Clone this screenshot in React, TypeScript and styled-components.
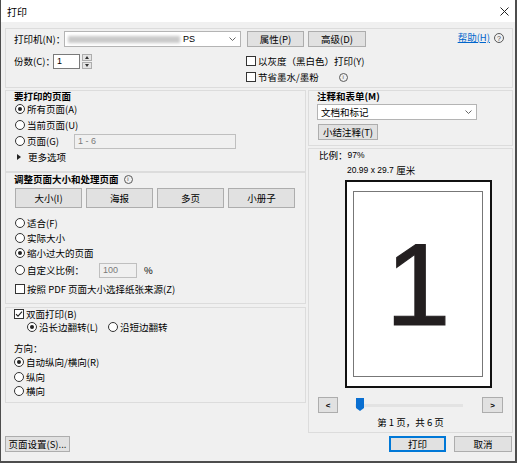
import React from "react";
import styled, { createGlobalStyle } from "styled-components";

const GlobalStyle = createGlobalStyle`
  html, body {
    margin: 0;
    padding: 0;
    background: #fff;
  }
  body {
    font-family: "Noto Sans CJK SC", "Noto Sans", sans-serif;
    font-size: 9.5px;
    color: #000;
  }
  * {
    box-sizing: border-box;
  }
`;

const Window = styled.div`
  width: 517px;
  height: 463px;
  background: #f0f0f0;
  border-left: 1px solid #4d4d4d;
  border-right: 2px solid #4d4d4d;
  border-bottom: 2px solid #4d4d4d;
  display: flex;
  flex-direction: column;
`;

const TitleBar = styled.div`
  height: 22px;
  flex: none;
  background: #fff;
  display: flex;
  align-items: center;
  justify-content: space-between;
  padding: 0 6px;
  font-size: 10px;
`;

const Content = styled.div`
  flex: 1;
  display: flex;
  flex-direction: column;
  padding: 6px 2px 0 4px;
`;

const Group = styled.div<{ $h: number; $mt?: number }>`
  height: ${(p) => p.$h}px;
  margin-top: ${(p) => p.$mt || 0}px;
  flex: none;
  border: 1px solid #dcdcdc;
  padding: 0 8px;
  display: flex;
  flex-direction: column;
`;

const Row = styled.div<{ $h: number; $mt?: number; $pl?: number }>`
  height: ${(p) => p.$h}px;
  margin-top: ${(p) => p.$mt || 0}px;
  padding-left: ${(p) => p.$pl || 0}px;
  flex: none;
  display: flex;
  align-items: center;
  white-space: nowrap;
`;

const Heading = styled.span`
  font-weight: bold;
`;

const Label = styled.span<{ $w?: number }>`
  width: ${(p) => (p.$w ? `${p.$w}px` : "auto")};
  flex: none;
`;

const Select = styled.div<{ $w: number }>`
  width: ${(p) => p.$w}px;
  height: 16px;
  background: #fff;
  border: 1px solid #b4b4b4;
  display: flex;
  align-items: center;
  padding: 0 4px 0 3px;
`;

const Blurred = styled.span`
  width: 112px;
  height: 7px;
  background: #c9c9c9;
  filter: blur(1.6px);
  margin-right: 3px;
`;

const Chevron = styled.svg`
  margin-left: auto;
  flex: none;
`;

const Button = styled.div<{ $w: number; $h?: number; $ml?: number; $primary?: boolean }>`
  width: ${(p) => p.$w}px;
  height: ${(p) => p.$h || 16}px;
  margin-left: ${(p) => p.$ml || 0}px;
  flex: none;
  display: flex;
  align-items: center;
  justify-content: center;
  background: #e1e1e1;
  border: 1px solid ${(p) => (p.$primary ? "#0078d7" : "#adadad")};
  box-shadow: ${(p) => (p.$primary ? "inset 0 0 0 1px #0078d7" : "none")};
`;

const HelpLink = styled.span`
  margin-left: auto;
  align-self: flex-start;
  line-height: 12px;
  color: #0066cc;
  text-decoration: underline;
`;

const CircleIcon = styled.span<{ $size: number; $ml?: number }>`
  width: ${(p) => p.$size}px;
  height: ${(p) => p.$size}px;
  margin-left: ${(p) => p.$ml || 0}px;
  flex: none;
  border: 1px solid #5a5a5a;
  border-radius: 50%;
  display: inline-flex;
  align-items: center;
  justify-content: center;
  font-family: "Liberation Sans", sans-serif;
  font-size: ${(p) => p.$size - 3}px;
  line-height: 1;
  color: #444;
`;

const HelpIcon = styled(CircleIcon)`
  align-self: flex-start;
  margin-top: 2px;
`;

const TextInput = styled.div<{ $w: number; $ml?: number; $disabled?: boolean }>`
  width: ${(p) => p.$w}px;
  height: 15px;
  margin-left: ${(p) => p.$ml || 0}px;
  flex: none;
  display: flex;
  align-items: center;
  padding-left: 3px;
  background: ${(p) => (p.$disabled ? "#f0f0f0" : "#fff")};
  border: 1px solid ${(p) => (p.$disabled ? "#bfbfbf" : "#7a7a7a")};
  color: ${(p) => (p.$disabled ? "#7a7a7a" : "#000")};
  font-family: "Liberation Sans", sans-serif;
  font-size: 9px;
`;

const Spinner = styled.div`
  width: 10px;
  height: 15px;
  margin-left: 2px;
  display: flex;
  flex-direction: column;
  gap: 1px;
`;

const SpinHalf = styled.div`
  flex: 1;
  background: #e5e5e5;
  border: 1px solid #adadad;
  display: flex;
  align-items: center;
  justify-content: center;
`;

const CopiesBlock = styled.div`
  width: 232px;
  height: 16px;
  display: flex;
  align-items: center;
  flex: none;
`;

const CheckColumn = styled.div`
  display: flex;
  flex-direction: column;
`;

const Option = styled.span<{ $ml?: number }>`
  display: inline-flex;
  align-items: center;
  margin-left: ${(p) => p.$ml || 0}px;
  flex: none;
`;

const Radio = styled.span<{ $checked?: boolean }>`
  width: 10px;
  height: 10px;
  flex: none;
  border: 1px solid #333;
  border-radius: 50%;
  background: #fff;
  display: inline-flex;
  align-items: center;
  justify-content: center;
  margin-right: 2px;
  &::after {
    content: "";
    width: 4px;
    height: 4px;
    border-radius: 50%;
    background: ${(p) => (p.$checked ? "#222" : "transparent")};
  }
`;

const Check = styled.span`
  width: 10px;
  height: 10px;
  flex: none;
  border: 1px solid #333;
  background: #fff;
  display: inline-flex;
  align-items: center;
  justify-content: center;
  margin-right: 2px;
`;

const OptionText = styled.span<{ $w?: number }>`
  width: ${(p) => (p.$w ? `${p.$w}px` : "auto")};
  flex: none;
`;

const MainRow = styled.div`
  display: flex;
  gap: 2px;
  margin-top: 2px;
  height: 343px;
`;

const LeftCol = styled.div`
  width: 301px;
  display: flex;
  flex-direction: column;
`;

const RightCol = styled.div`
  flex: 1;
  display: flex;
  flex-direction: column;
`;

const ButtonRow = styled.div`
  display: flex;
  gap: 4px;
  margin-top: 3px;
  padding-left: 1px;
`;

const PageFrame = styled.div`
  width: 147px;
  height: 208px;
  margin: 4px 0 0 28px;
  flex: none;
  background: #fff;
  border: 2px solid #111;
  padding: 9px 7px 9px 6px;
  display: flex;
`;

const PageInner = styled.div`
  flex: 1;
  border: 1px solid #777;
  display: flex;
  align-items: center;
  justify-content: center;
`;

const BigNumber = styled.span`
  font-family: "Liberation Sans", Arial, sans-serif;
  font-size: 117px;
  line-height: 1;
  color: #231f20;
  -webkit-text-stroke: 1.2px #231f20;
`;

const NavButton = styled(Button)`
  font-family: "Liberation Sans", sans-serif;
  font-size: 8px;
  font-weight: bold;
`;

const Track = styled.div`
  position: relative;
  width: 108px;
  height: 3px;
  margin-left: 17px;
  background: #e3e3e3;
`;

const Thumb = styled.svg`
  position: absolute;
  left: 1px;
  top: -6px;
`;

const PageInfo = styled.div`
  height: 13px;
  margin-top: 2px;
  display: flex;
  align-items: center;
  justify-content: center;
`;

const BottomBar = styled.div`
  display: flex;
  align-items: center;
  margin-top: 3px;
  padding-right: 1px;
`;

const Spacer = styled.div`
  flex: 1;
`;

const Latin = styled.span`
  font-family: "Liberation Sans", sans-serif;
  font-size: 8.5px;
`;

const ChevronIcon = () => (
  <Chevron width="7" height="4" viewBox="0 0 7 4">
    <path d="M0.5 0.5 L3.5 3.5 L6.5 0.5" fill="none" stroke="#555" strokeWidth="0.9" />
  </Chevron>
);

const Tick = () => (
  <svg width="8" height="8" viewBox="0 0 8 8">
    <path d="M1 4.2 L3 6.2 L7 1.6" fill="none" stroke="#222" strokeWidth="1.1" />
  </svg>
);

export default function App() {
  return (
    <>
      <GlobalStyle />
      <Window>
        <TitleBar>
          <span>打印</span>
          <svg width="9" height="9" viewBox="0 0 9 9">
            <path d="M0.5 0.5 L8.5 8.5 M8.5 0.5 L0.5 8.5" stroke="#222" strokeWidth="1" />
          </svg>
        </TitleBar>
        <Content>
          <Group $h={60}>
            <Row $h={16} $mt={2}>
              <Label $w={50}>打印机(N)：</Label>
              <Select $w={177}>
                <Blurred />
                <Latin style={{ fontSize: 9 }}>PS</Latin>
                <ChevronIcon />
              </Select>
              <Button $w={57} $ml={6}>属性(P)</Button>
              <Button $w={58} $ml={4}>高级(D)</Button>
              <HelpLink>帮助(H)</HelpLink>
              <HelpIcon $size={10} $ml={4}>?</HelpIcon>
            </Row>
            <Row $h={32} $mt={6} style={{ alignItems: "flex-start" }}>
              <CopiesBlock>
                <Label $w={39}>份数(C)：</Label>
                <TextInput $w={27}>1</TextInput>
                <Spinner>
                  <SpinHalf>
                    <svg width="4" height="3" viewBox="0 0 4 3">
                      <path d="M0 3 L2 0 L4 3 Z" fill="#333" />
                    </svg>
                  </SpinHalf>
                  <SpinHalf>
                    <svg width="4" height="3" viewBox="0 0 4 3">
                      <path d="M0 0 L2 3 L4 0 Z" fill="#333" />
                    </svg>
                  </SpinHalf>
                </Spinner>
              </CopiesBlock>
              <CheckColumn>
                <Row $h={16}>
                  <Check />
                  <OptionText>以灰度（黑白色）打印(Y)</OptionText>
                </Row>
                <Row $h={16}>
                  <Check />
                  <OptionText>节省墨水/墨粉</OptionText>
                  <CircleIcon $size={9} $ml={20}>i</CircleIcon>
                </Row>
              </CheckColumn>
            </Row>
          </Group>

          <MainRow>
            <LeftCol>
              <Group $h={82}>
                <Row $h={10}>
                  <Heading>要打印的页面</Heading>
                </Row>
                <Row $h={16} $pl={1}>
                  <Radio $checked />
                  <OptionText>所有页面(A)</OptionText>
                </Row>
                <Row $h={15} $pl={1}>
                  <Radio />
                  <OptionText>当前页面(U)</OptionText>
                </Row>
                <Row $h={18} $pl={1}>
                  <Radio />
                  <OptionText $w={47}>页面(G)</OptionText>
                  <TextInput $w={162} $disabled>
                    1 - 6
                  </TextInput>
                </Row>
                <Row $h={14} $pl={3}>
                  <svg width="4" height="6" viewBox="0 0 4 6">
                    <path d="M0 0 L4 3 L0 6 Z" fill="#222" />
                  </svg>
                  <OptionText style={{ marginLeft: 7 }}>更多选项</OptionText>
                </Row>
              </Group>

              <Group $h={132}>
                <Row $h={12}>
                  <Heading>调整页面大小和处理页面</Heading>
                  <CircleIcon $size={9} $ml={5}>i</CircleIcon>
                </Row>
                <ButtonRow>
                  <Button $w={67} $h={20}>大小(I)</Button>
                  <Button $w={67} $h={20}>海报</Button>
                  <Button $w={67} $h={20}>多页</Button>
                  <Button $w={67} $h={20}>小册子</Button>
                </ButtonRow>
                <Row $h={16} $mt={7} $pl={1}>
                  <Radio />
                  <OptionText>适合(F)</OptionText>
                </Row>
                <Row $h={14} $pl={1}>
                  <Radio />
                  <OptionText>实际大小</OptionText>
                </Row>
                <Row $h={15} $pl={1}>
                  <Radio $checked />
                  <OptionText>缩小过大的页面</OptionText>
                </Row>
                <Row $h={20} $pl={1}>
                  <Radio />
                  <OptionText $w={72}>自定义比例：</OptionText>
                  <TextInput $w={38} $disabled>
                    100
                  </TextInput>
                  <OptionText style={{ marginLeft: 7 }}>%</OptionText>
                </Row>
                <Row $h={18} $pl={1}>
                  <Check />
                  <OptionText>按照 PDF 页面大小选择纸张来源(Z)</OptionText>
                </Row>
              </Group>

              <Group $h={96} $mt={3}>
                <Row $h={11}>
                  <Check>
                    <Tick />
                  </Check>
                  <OptionText>双面打印(B)</OptionText>
                </Row>
                <Row $h={16} $pl={13}>
                  <Option>
                    <Radio $checked />
                    <OptionText $w={69}>沿长边翻转(L)</OptionText>
                  </Option>
                  <Option>
                    <Radio />
                    <OptionText>沿短边翻转</OptionText>
                  </Option>
                </Row>
                <Row $h={15} $mt={5}>
                  <OptionText>方向：</OptionText>
                </Row>
                <Row $h={14}>
                  <Radio $checked />
                  <OptionText>自动纵向/横向(R)</OptionText>
                </Row>
                <Row $h={15}>
                  <Radio />
                  <OptionText>纵向</OptionText>
                </Row>
                <Row $h={14}>
                  <Radio />
                  <OptionText>横向</OptionText>
                </Row>
              </Group>
            </LeftCol>

            <RightCol>
              <Group $h={56}>
                <Row $h={10}>
                  <Heading>注释和表单(M)</Heading>
                </Row>
                <Row $h={16} $mt={3}>
                  <Select $w={160}>
                    <span>文档和标记</span>
                    <ChevronIcon />
                  </Select>
                </Row>
                <Row $h={16} $mt={4}>
                  <Button $w={60} $ml={1}>小结注释(T)</Button>
                </Row>
              </Group>

              <Group $h={285} $mt={2}>
                <Row $h={12} $pl={2}>
                  比例：<Latin>97%</Latin>
                </Row>
                <Row $h={12} $mt={3} $pl={30}>
                  <Latin>20.99 x 29.7&nbsp;</Latin>
                  厘米
                </Row>
                <PageFrame>
                  <PageInner>
                    <BigNumber>1</BigNumber>
                  </PageInner>
                </PageFrame>
                <Row $h={16} $mt={9}>
                  <NavButton $w={20} $ml={1}>&lt;</NavButton>
                  <Track>
                    <Thumb width="8" height="13" viewBox="0 0 8 13">
                      <path d="M0 0 H8 V10 L4 13 L0 10 Z" fill="#0a6fd1" />
                    </Thumb>
                  </Track>
                  <NavButton $w={21} $ml={19}>&gt;</NavButton>
                </Row>
                <PageInfo>第 1 页，共 6 页</PageInfo>
              </Group>
            </RightCol>
          </MainRow>

          <BottomBar>
            <Button $w={65}>页面设置(S)...</Button>
            <Spacer />
            <Button $w={57} $primary>
              打印
            </Button>
            <Button $w={58} $ml={8}>
              取消
            </Button>
          </BottomBar>
        </Content>
      </Window>
    </>
  );
}
